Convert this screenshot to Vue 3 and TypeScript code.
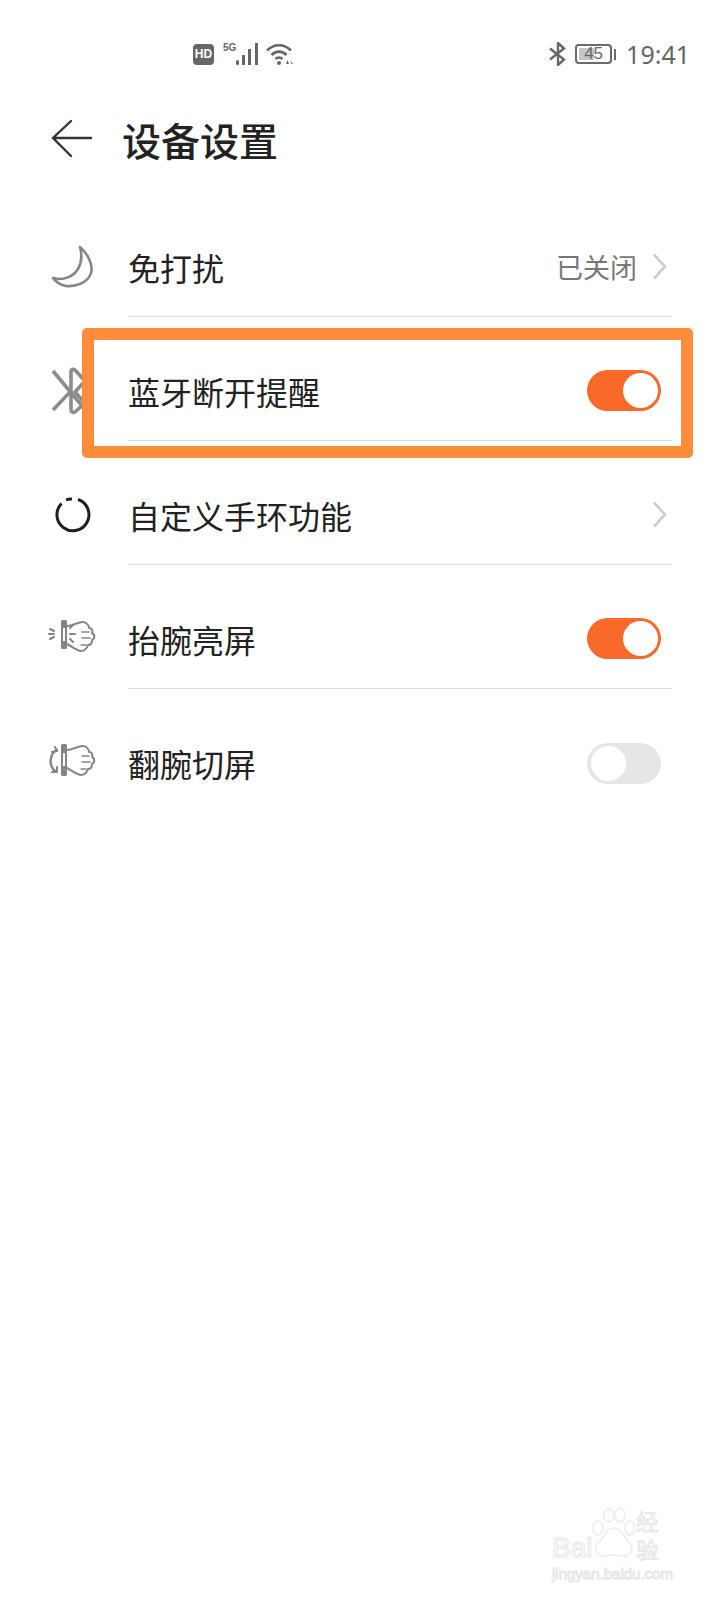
<script setup lang="ts">
type Row = {
  id: string;
  label: string;
  icon: "moon" | "bluetooth" | "ring" | "raise" | "flip";
  value?: string;
  chevron?: boolean;
  toggle?: boolean;
  on?: boolean;
};

const rows: Row[] = [
  { id: "dnd", label: "免打扰", icon: "moon", value: "已关闭", chevron: true },
  { id: "bt", label: "蓝牙断开提醒", icon: "bluetooth", toggle: true, on: true },
  { id: "band", label: "自定义手环功能", icon: "ring", chevron: true },
  { id: "raise", label: "抬腕亮屏", icon: "raise", toggle: true, on: true },
  { id: "flip", label: "翻腕切屏", icon: "flip", toggle: true, on: false },
];
</script>

<template>
  <div class="page">
    <div class="status">
      <div class="status-left">
        <span class="hd">HD</span>
        <span class="net">5G</span>
        <svg class="signal" width="24" height="24" viewBox="0 0 24 24">
          <rect x="0" y="18" width="3" height="5" rx="1.5" fill="#666" />
          <rect x="6" y="13" width="3" height="10" fill="#666" />
          <rect x="12" y="7" width="3" height="16" fill="#666" />
          <rect x="19" y="1" width="3" height="22" fill="#666" />
        </svg>
        <svg class="wifi" width="28" height="24" viewBox="0 0 28 24" fill="none" stroke="#666" stroke-width="2.6">
          <path d="M1 8.5C8 1.5 18 1.5 25 8.5" />
          <path d="M5.5 13C10 8.5 16 8.5 20.5 13" />
          <path d="M9.5 17C11.5 15 14.5 15 16.5 17" />
          <circle cx="13" cy="21" r="2" fill="#666" stroke="none" />
          <path d="M20 22h3l-1.5-4zM24 18l1.5 4h1.500z" fill="#666" stroke="none" />
        </svg>
      </div>
      <div class="status-right">
        <svg width="18" height="24" viewBox="0 0 18 24" fill="none" stroke="#666" stroke-width="2.4">
          <path d="M1 6.500L15 17.500L9 23V1L15 6.500L1 17.500" />
        </svg>
        <div class="battery">
          <div class="battery-fill"></div>
          <span class="battery-num">45</span>
        </div>
        <span class="battery-tip"></span>
        <span class="time">19:41</span>
      </div>
    </div>

    <header class="head">
      <svg width="42" height="40" viewBox="0 0 42 40" fill="none" stroke="#333" stroke-width="2.400" stroke-linecap="round">
        <path d="M20 2L2 19L20 37M2 19H40" />
      </svg>
      <h1>设备设置</h1>
    </header>

    <div class="list">
      <div v-for="(row, i) in rows" :key="row.id" class="row">
        <div class="icon">
          <svg v-if="row.icon === 'moon'" width="44" height="44" viewBox="0 0 44 44" fill="none" stroke="#858585" stroke-width="2.600" stroke-linejoin="round">
            <path d="M29 2C34 6 43 18 40 28C37 38 24 42 15 41C9 40 5 37 2 33C12 36 22 32 27 24C31 17 31 9 29 2Z" />
          </svg>
          <svg v-else-if="row.icon === 'bluetooth'" width="44" height="48" viewBox="0 0 44 48" fill="none" stroke="#8c8c8c" stroke-width="3.600" stroke-linejoin="round">
            <path d="M2 4L32 40" />
            <path d="M22 5V41L30 43L34 36L4 38" stroke="none" />
            <path d="M20 24V5C20 2 22 2 24 3L34 14L24 25L34 36L24 45C22 46 20 45 20 42V24L2 43" />
          </svg>
          <svg v-else-if="row.icon === 'ring'" width="44" height="44" viewBox="0 0 44 44" fill="none" stroke="#1f1f1f" stroke-width="3">
            <path d="M27 6.500A16 16 0 1 1 10.500 10.500" />
            <path d="M15 6.800A16 16 0 0 1 21 6" />
          </svg>
          <svg v-else-if="row.icon === 'raise'" width="50" height="40" viewBox="0 0 50 40" fill="none" stroke="#858585" stroke-width="2" stroke-linecap="round" stroke-linejoin="round">
            <rect x="13" y="1" width="6" height="29" rx="1.500" fill="#858585" stroke="none" />
            <rect x="15" y="9" width="2" height="13" fill="#fff" stroke="none" />
            <path d="M19 7C25 7 29 3 35 3C39 3 41 7 41 9C44 9 45 12 44 14C47 15 47 20 44 21C44 25 42 26 40 26C39 29 37 32 33 32C29 32 25 28 19 25" />
            <path d="M34 13H41M34 19H42M33 26H38" stroke-width="1.500" />
            <path d="M2 10L6 12M1 15H6M2 20L6 18M22 9L25 6M22 15H27M22 20L25 23" />
          </svg>
          <svg v-else-if="row.icon === 'flip'" width="50" height="40" viewBox="0 0 50 40" fill="none" stroke="#858585" stroke-width="2" stroke-linecap="round" stroke-linejoin="round">
            <rect x="13" y="1" width="6" height="32" rx="1.500" fill="#858585" stroke="none" />
            <rect x="15" y="10" width="2" height="13" fill="#fff" stroke="none" />
            <path d="M19 7C25 7 29 3 35 3C39 3 41 7 41 9C44 9 45 12 44 14C47 15 47 20 44 21C44 25 42 26 40 26C39 29 37 32 33 32C29 32 25 28 19 25" />
            <path d="M34 13H41M34 19H42M33 26H38" stroke-width="1.500" />
            <path d="M9 7C2 10 0 22 7 28" stroke-width="2.400" />
            <path d="M7 4L9 8L4 9M4 29H9V24" />
          </svg>
        </div>
        <div class="body" :class="{ last: i === rows.length - 1 }">
          <span class="label">{{ row.label }}</span>
          <div class="trail">
            <span v-if="row.value" class="value">{{ row.value }}</span>
            <svg v-if="row.chevron" class="chevron" width="15" height="27" viewBox="0 0 15 27" fill="none" stroke="#cfcfcf" stroke-width="2.600" stroke-linejoin="round">
              <path d="M2 1.500L13 13.500L2 25.500" />
            </svg>
            <div v-if="row.toggle" class="switch" :class="{ on: row.on }">
              <span class="knob"></span>
            </div>
          </div>
        </div>
        <div v-if="row.id === 'bt'" class="mark"></div>
      </div>
    </div>

    <div class="watermark">
      <div class="wm-top">
        <span>Bai</span>
        <svg width="44" height="56" viewBox="0 0 44 56" fill="none" stroke="#ececec" stroke-width="1.500">
          <ellipse cx="17" cy="9" rx="5" ry="7" />
          <ellipse cx="28" cy="9" rx="5" ry="7" />
          <ellipse cx="6" cy="22" rx="5" ry="7" />
          <ellipse cx="38" cy="22" rx="5" ry="7" />
          <path d="M22 22C14 22 13 31 7 36C0 43 6 51 14 50C19 49 25 49 30 50C38 51 44 43 37 36C31 31 30 22 22 22Z" />
        </svg>
        <span class="wm-cn">经验</span>
      </div>
      <div class="wm-url">jingyan.baidu.com</div>
    </div>
  </div>
</template>

<style scoped>
.page {
  position: relative;
  width: 720px;
  height: 1600px;
  overflow: hidden;
  background: #fff;
  font-family: "Noto Sans CJK SC", "Noto Sans", sans-serif;
  color: #222;
}

.status {
  display: flex;
  justify-content: space-between;
  align-items: center;
  height: 24px;
  padding: 42px 30px 42px 193px;
}

.status-left,
.status-right {
  display: flex;
  align-items: center;
}

.hd {
  width: 21px;
  height: 21px;
  border-radius: 4px;
  background: #666;
  color: #fff;
  font: 700 12px/21px "Liberation Sans", sans-serif;
  text-align: center;
}

.net {
  align-self: flex-start;
  margin-left: 9px;
  color: #666;
  font: 700 10px/12px "Liberation Sans", sans-serif;
}

.signal {
  margin-left: 0;
}

.wifi {
  margin-left: 6px;
}

.battery {
  position: relative;
  width: 37px;
  height: 20px;
  margin-left: 8px;
  border: 2px solid #6a6a6a;
  border-radius: 4px;
  box-sizing: border-box;
}

.battery-fill {
  width: 15px;
  height: 12px;
  margin: 2px;
  background: #c6c6c6;
}

.battery-num {
  position: absolute;
  inset: 0;
  color: #666;
  font: 17px/16px "Liberation Sans", sans-serif;
  text-align: center;
}

.battery-tip {
  width: 2px;
  height: 11px;
  margin-left: 2px;
  background: #6a6a6a;
}

.time {
  margin-left: 10px;
  color: #666;
  font: 25px/24px "Noto Sans", sans-serif;
}

.head {
  display: flex;
  align-items: center;
  gap: 29px;
  height: 62px;
  padding-left: 51px;
}

.head h1 {
  margin: 0;
  font-size: 39px;
  font-weight: 500;
  line-height: 62px;
  color: #222;
}

.list {
  margin-top: 23px;
  padding: 0 48px;
}

.row {
  position: relative;
  display: flex;
  height: 124px;
}

.icon {
  display: flex;
  align-items: center;
  justify-content: center;
  width: 50px;
  height: 48px;
  margin: 50px 30px 0 0;
}

.body {
  flex: 1;
  display: flex;
  align-items: center;
  justify-content: space-between;
  box-sizing: border-box;
  padding-top: 24px;
  border-bottom: 1px solid #dcdcdc;
}

.body.last {
  border-bottom: none;
}

.label {
  font-size: 32px;
  line-height: 44px;
  color: #222;
}

.trail {
  display: flex;
  align-items: center;
}

.value {
  margin-right: 15px;
  font-size: 27px;
  color: #777;
}

.chevron {
  margin-right: 5px;
}

.switch {
  position: relative;
  width: 74px;
  height: 41px;
  margin-right: 11px;
  border-radius: 21px;
  background: #e6e6e6;
}

.switch.on {
  background: #f96a2a;
}

.knob {
  position: absolute;
  top: 3px;
  left: 4px;
  width: 35px;
  height: 35px;
  border-radius: 50%;
  background: #fff;
}

.switch.on .knob {
  left: 36px;
}

.mark {
  position: absolute;
  top: 11px;
  left: 34px;
  width: 611px;
  height: 130px;
  box-sizing: border-box;
  border: 12px solid #ff8c3a;
  border-radius: 5px;
}

.watermark {
  position: absolute;
  right: 40px;
  bottom: 18px;
  width: 128px;
  color: #fff;
  -webkit-text-stroke: 1px #e6e6e6;
  font-family: "Liberation Sans", sans-serif;
}

.wm-top {
  display: flex;
  align-items: flex-end;
  font-size: 28px;
  line-height: 28px;
}

.wm-cn {
  font-family: "Noto Sans CJK SC", sans-serif;
  font-size: 22px;
}

.wm-url {
  margin-top: 4px;
  font-size: 15px;
  line-height: 16px;
  white-space: nowrap;
}
</style>

<style>
html,
body {
  margin: 0;
  background: #fff;
}
</style>
